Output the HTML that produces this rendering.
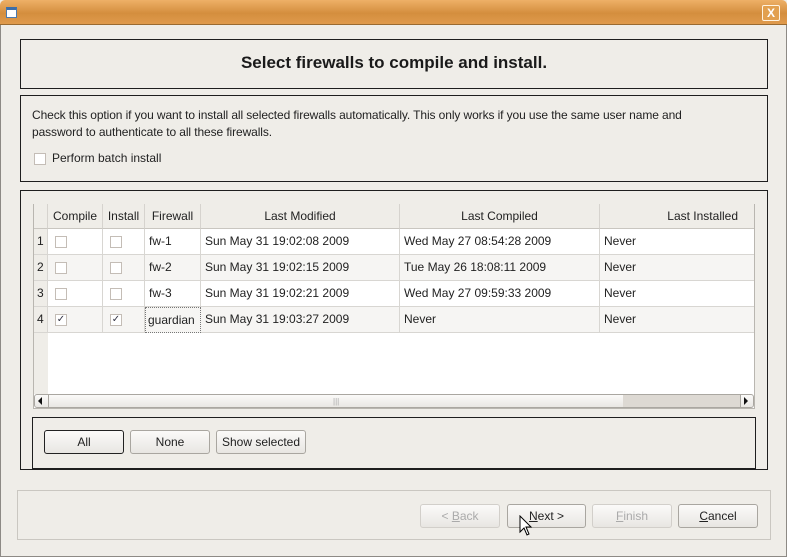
<!DOCTYPE html>
<html><head><style>
*{margin:0;padding:0;box-sizing:border-box}
body{width:787px;height:557px;background:#efede8;font-family:"Liberation Sans",sans-serif;font-size:12px;color:#222;position:relative;overflow:hidden}
.a{position:absolute}
.frame{position:absolute;border:1px solid #1e1e1e}
.btn{position:absolute;height:24px;border:1px solid #a9a6a0;border-radius:3px;background:linear-gradient(#fbfaf9,#e8e6e2);text-align:center;line-height:22px;font-size:12px}
.cb{position:absolute;width:12px;height:12px;border:1px solid #c4bdb6;background:#fff;font-size:10px;line-height:10px;text-align:center;color:#334}
.cell{position:absolute;height:26px;line-height:24px;padding-left:4px;white-space:nowrap;border-right:1px solid #d8d6d2;border-bottom:1px solid #d8d6d2}
.hd{position:absolute;top:204px;height:25px;line-height:24px;text-align:center;border-right:1px solid #d6d3ce;border-bottom:1px solid #c9c6c0;background:#efede8}
</style></head><body>
<div class="a" style="left:0;top:0;width:787px;height:25px;border-radius:5px 5px 0 0;background:linear-gradient(#eeb067,#d48e3e 55%,#df9a4c);border-bottom:1px solid #9a6a30"></div>
<div class="a" style="left:6px;top:7px;width:11px;height:11px;background:#fff;border:1px solid #4a7ab0;border-top:3px solid #3d6ea8"></div>
<div class="a" style="left:762px;top:5px;width:18px;height:16px;border:1px solid #fff3e0;border-radius:2px;background:#e2a04f;color:#fff;font-weight:bold;text-align:center;line-height:14px;font-size:12px">X</div>
<div class="a" style="left:0;top:25px;width:787px;height:532px;border:1px solid #8d8a85;border-top:none"></div>

<div class="frame" style="left:20px;top:39px;width:748px;height:50px;text-align:center;line-height:46px;font-size:17px;font-weight:bold;color:#1a1a1a">Select firewalls to compile and install.</div>

<div class="frame" style="left:20px;top:95px;width:748px;height:87px"></div>
<div class="a" style="left:32px;top:107px;width:685px;line-height:17px;letter-spacing:-0.1px">Check this option if you want to install all selected firewalls automatically. This only works if you use the same user name and password to authenticate to all these firewalls.</div>
<div class="cb" style="left:34px;top:153px"></div>
<div class="a" style="left:52px;top:151px">Perform batch install</div>

<div class="frame" style="left:20px;top:190px;width:748px;height:280px"></div>
<div class="a" style="left:33px;top:204px;width:722px;height:205px;background:#fff;border:1px solid #b9b6b0"></div>
<div class="a" style="left:34px;top:229px;width:14px;height:165px;background:#efede8"></div>
<div class="hd" style="left:34px;width:14px"></div>
<div class="hd" style="left:48px;width:55px">Compile</div>
<div class="hd" style="left:103px;width:42px">Install</div>
<div class="hd" style="left:145px;width:56px">Firewall</div>
<div class="hd" style="left:201px;width:199px">Last Modified</div>
<div class="hd" style="left:400px;width:200px">Last Compiled</div>
<div class="hd" style="left:600px;width:154px;text-align:right;padding-right:16px;border-right:none">Last Installed</div>

<div class="a" style="left:48px;top:255px;width:706px;height:26px;background:#f6f5f3"></div>
<div class="a" style="left:48px;top:307px;width:706px;height:26px;background:#f6f5f3"></div>

<div class="cell" style="left:34px;top:229px;width:14px;padding-left:3px">1</div>
<div class="cell" style="left:34px;top:255px;width:14px;padding-left:3px">2</div>
<div class="cell" style="left:34px;top:281px;width:14px;padding-left:3px">3</div>
<div class="cell" style="left:34px;top:307px;width:14px;padding-left:3px">4</div>
<div class="cell" style="left:48px;top:229px;width:55px"></div><div class="cell" style="left:103px;top:229px;width:42px"></div>
<div class="cell" style="left:48px;top:255px;width:55px"></div><div class="cell" style="left:103px;top:255px;width:42px"></div>
<div class="cell" style="left:48px;top:281px;width:55px"></div><div class="cell" style="left:103px;top:281px;width:42px"></div>
<div class="cell" style="left:48px;top:307px;width:55px"></div><div class="cell" style="left:103px;top:307px;width:42px"></div>
<div class="cb" style="left:55px;top:236px"></div><div class="cb" style="left:110px;top:236px"></div>
<div class="cb" style="left:55px;top:262px"></div><div class="cb" style="left:110px;top:262px"></div>
<div class="cb" style="left:55px;top:288px"></div><div class="cb" style="left:110px;top:288px"></div>
<div class="cb" style="left:55px;top:314px">✓</div><div class="cb" style="left:110px;top:314px">✓</div>

<div class="cell" style="left:145px;top:229px;width:56px">fw-1</div>
<div class="cell" style="left:201px;top:229px;width:199px">Sun May 31 19:02:08 2009</div>
<div class="cell" style="left:400px;top:229px;width:200px">Wed May 27 08:54:28 2009</div>
<div class="cell" style="left:600px;top:229px;width:154px;border-right:none">Never</div>
<div class="cell" style="left:145px;top:255px;width:56px">fw-2</div>
<div class="cell" style="left:201px;top:255px;width:199px">Sun May 31 19:02:15 2009</div>
<div class="cell" style="left:400px;top:255px;width:200px">Tue May 26 18:08:11 2009</div>
<div class="cell" style="left:600px;top:255px;width:154px;border-right:none">Never</div>
<div class="cell" style="left:145px;top:281px;width:56px">fw-3</div>
<div class="cell" style="left:201px;top:281px;width:199px">Sun May 31 19:02:21 2009</div>
<div class="cell" style="left:400px;top:281px;width:200px">Wed May 27 09:59:33 2009</div>
<div class="cell" style="left:600px;top:281px;width:154px;border-right:none">Never</div>
<div class="cell" style="left:145px;top:307px;width:56px;padding-left:2px;border:1px dotted #777">guardian</div>
<div class="cell" style="left:201px;top:307px;width:199px">Sun May 31 19:03:27 2009</div>
<div class="cell" style="left:400px;top:307px;width:200px">Never</div>
<div class="cell" style="left:600px;top:307px;width:154px;border-right:none">Never</div>

<div class="a" style="left:34px;top:394px;width:720px;height:14px;background:linear-gradient(#fbfaf9,#e9e7e3);border:1px solid #aaa7a1;border-radius:3px"></div>
<div class="a" style="left:623px;top:395px;width:117px;height:12px;background:#ddd9d3"></div>
<div class="a" style="left:38px;top:397px;width:0;height:0;border:4px solid transparent;border-right:4px solid #111;border-left:none"></div>
<div class="a" style="left:744px;top:397px;width:0;height:0;border:4px solid transparent;border-left:4px solid #111;border-right:none"></div>
<div class="a" style="left:740px;top:395px;width:1px;height:12px;background:#aaa7a1"></div>
<div class="a" style="left:48px;top:395px;width:1px;height:12px;background:#aaa7a1"></div>
<div class="a" style="left:333px;top:397px;font-size:8px;color:#aaa">|||</div>

<div class="frame" style="left:32px;top:417px;width:724px;height:52px"></div>
<div class="btn" style="left:44px;top:430px;width:80px;border-color:#222">All</div>
<div class="btn" style="left:130px;top:430px;width:80px">None</div>
<div class="btn" style="left:216px;top:430px;width:90px">Show selected</div>

<div class="a" style="left:17px;top:490px;width:754px;height:50px;border:1px solid #cac7c1"></div>
<div class="btn" style="left:420px;top:504px;width:80px;color:#aaa;border-color:#d2cfca">&lt; <u>B</u>ack</div>
<div class="btn" style="left:507px;top:504px;width:79px"><u>N</u>ext &gt;</div>
<div class="btn" style="left:592px;top:504px;width:80px;color:#aaa;border-color:#d2cfca"><u>F</u>inish</div>
<div class="btn" style="left:678px;top:504px;width:80px"><u>C</u>ancel</div>
<svg class="a" style="left:519px;top:515px" width="14" height="22" viewBox="0 0 14 22"><path d="M1 1 L1 17 L5 13 L8 20 L10 19 L7 12 L12 12 Z" fill="#fff" stroke="#000" stroke-width="1"/></svg>
</body></html>
